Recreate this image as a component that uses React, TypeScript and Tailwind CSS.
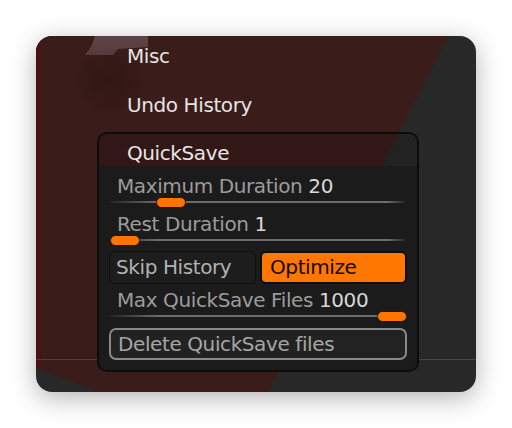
import React from "react";

const SliderRow = ({ label, value, thumb }: { label: string; value: string; thumb: string }) => {
  return (
    <div>
      <div className="h-[22px] pl-[8px] leading-[22px] text-[#9c9c9c]">
        {label} <span className="text-[#d8d8d8]">{value}</span>
      </div>
      <div className="relative ml-[1px] mr-[2px] h-[11px]">
        {/* track */}
        <div className="absolute inset-x-0 top-[4px] h-[2px] bg-[linear-gradient(90deg,#242424_0%,#6c6c6c_16%,#6c6c6c_94%,#2a2a2a_100%)]" />
        {/* thumb */}
        <div className={`absolute top-0 h-[11px] w-[30px] rounded-full border border-[#2b1300] bg-[#ff7500] ${thumb}`} />
      </div>
    </div>
  );
};

const Backdrop = () => (
  <svg className="absolute inset-0" width="440" height="356" viewBox="0 0 440 356">
    <defs>
      <radialGradient id="blob" cx="74" cy="44" r="38" gradientUnits="userSpaceOnUse">
        <stop offset="0" stopColor="#220e0e" stopOpacity="0.4" />
        <stop offset="1" stopColor="#220e0e" stopOpacity="0" />
      </radialGradient>
      <linearGradient id="edge" x1="0" x2="1" y1="0" y2="0">
        <stop offset="0" stopColor="#520a07" />
        <stop offset="1" stopColor="#3a1c1a" />
      </linearGradient>
      <linearGradient id="chip" x1="0" x2="0" y1="0" y2="1">
        <stop offset="0" stopColor="#614447" />
        <stop offset="1" stopColor="#553a3c" />
      </linearGradient>
    </defs>
    <rect width="440" height="356" fill="#282828" />
    <polygon points="0,0 412,0 232,356 64,356 0,332" fill="#3a1c1a" />
    <polygon points="0,0 6,0 6,334 0,332" fill="url(#edge)" />
    <rect width="440" height="356" fill="url(#blob)" />
    <polygon points="59,0 112,0 112,11 82,13 77,19 49,19 55,11" fill="url(#chip)" />
    <rect x="0" y="323" width="440" height="1" fill="#ffffff" fillOpacity="0.14" />
  </svg>
);

const App = () => {
  return (
    <div className="h-[428px] w-[512px] bg-white pl-[36px] pt-[36px] font-['DejaVu_Sans',sans-serif] text-[20px] tracking-[-0.4px]">
      <div className="relative h-[356px] w-[440px] overflow-hidden rounded-[16px] shadow-[0_6px_26px_rgba(0,0,0,0.3)]">
        <Backdrop />

        <div className="relative flex flex-col pt-[8px]">
          <div className="h-[24px] pl-[91px] leading-[24px] text-[#e4e4e4]">Misc</div>
          <div className="mt-[25px] h-[24px] pl-[91px] leading-[24px] text-[#e4e4e4]">Undo History</div>

          {/* QuickSave subpalette */}
          <div className="ml-[61px] mt-[15px] w-[322px] overflow-hidden rounded-[10px] border-2 border-[#0c0c0c]">
            <div className="h-[32px] bg-black/15 pl-[28px] pt-[8px] leading-[22px] text-[#e6e6e6]">QuickSave</div>

            <div className="flex flex-col bg-[#1b1b1b] px-[10px] pb-[10px] pt-[9px]">
              <SliderRow label="Maximum Duration" value="20" thumb="left-[46px]" />
              <div className="mt-[5px]">
                <SliderRow label="Rest Duration" value="1" thumb="left-0" />
              </div>

              <div className="mt-[5px] grid grid-cols-2 gap-[4px]">
                <div className="h-[33px] rounded-[6px] border border-[#101010] bg-[#1d1d1d] pl-[6px] leading-[31px] text-[#b2b2b2]">
                  Skip History
                </div>
                <div className="h-[33px] rounded-[6px] border-2 border-[#0e0e0e] bg-[#ff7600] pl-[8px] leading-[29px] text-[#140800]">
                  Optimize
                </div>
              </div>

              <div className="mt-[5px]">
                <SliderRow label="Max QuickSave Files" value="1000" thumb="left-[267px]" />
              </div>

              <div className="mt-[6px] h-[32px] rounded-[7px] border-2 border-[#8a8a8a] bg-[#222222] pl-[7px] leading-[28px] text-[#a6a6a6]">
                Delete QuickSave files
              </div>
            </div>
          </div>
        </div>
      </div>
    </div>
  );
};

export default App;
